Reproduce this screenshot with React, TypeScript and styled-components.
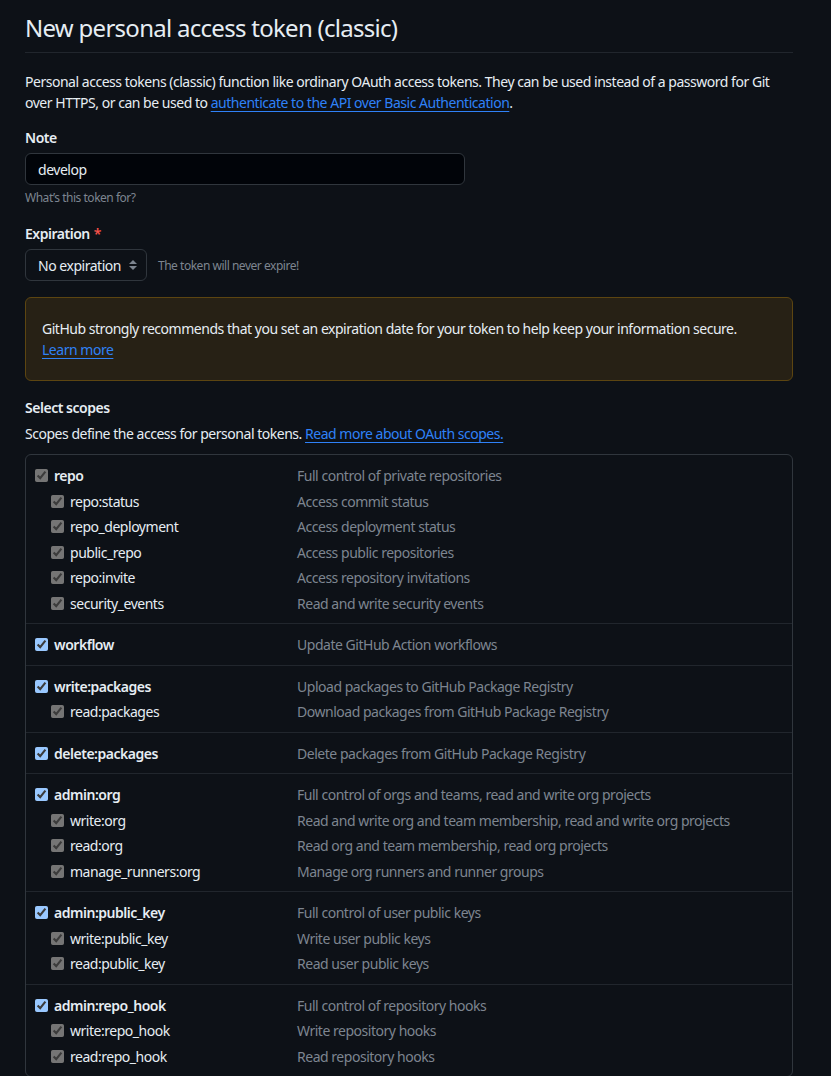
import React from 'react';
import styled, { createGlobalStyle } from 'styled-components';

const GlobalStyle = createGlobalStyle`
  html, body {
    margin: 0;
    background: #0d1117;
    color: #e6edf3;
    font-family: 'Noto Sans', 'Liberation Sans', sans-serif;
    font-size: 14px;
    letter-spacing: -0.034em;
    color-scheme: dark;
  }
  * { box-sizing: border-box; }
`;

const Page = styled.main`
  width: 768px;
  margin-left: 25px;
  padding-top: 10px;
`;

const Heading = styled.h1`
  margin: 0 0 18px;
  padding-bottom: 6px;
  font-size: 24px;
  font-weight: 400;
  line-height: 36px;
  letter-spacing: -0.03em;
  border-bottom: 1px solid #21262d;
`;

const Paragraph = styled.p<{ $flush?: boolean }>`
  margin: 0 0 ${p => (p.$flush ? '0' : '14px')};
  line-height: 21px;
`;

const Link = styled.a`
  color: #2f81f7;
  text-decoration: underline;
  text-underline-offset: 3px;
`;

const Label = styled.div`
  font-weight: 600;
  line-height: 21px;
  margin-bottom: 5px;
`;

const Required = styled.span`
  color: #f85149;
  margin-left: 4px;
`;

const Field = styled.div`
  margin-bottom: 16px;
`;

const TextInput = styled.div`
  width: 440px;
  height: 32px;
  padding: 0 12px;
  display: flex;
  align-items: center;
  background: #010409;
  border: 1px solid #30363d;
  border-radius: 6px;
`;

const Hint = styled.div`
  font-size: 12px;
  line-height: 18px;
  color: #7d8590;
  margin-top: 4px;
`;

const InlineRow = styled.div`
  display: flex;
  align-items: center;
  gap: 11px;
`;

const Select = styled.div`
  height: 32px;
  padding: 0 8px 0 12px;
  display: flex;
  align-items: center;
  gap: 7px;
  background: #0d1117;
  border: 1px solid #30363d;
  border-radius: 6px;
`;

const InlineHint = styled.span`
  font-size: 12px;
  color: #7d8590;
`;

const Flash = styled.div`
  padding: 20px 16px;
  margin-bottom: 16px;
  background: #272115;
  border: 1px solid #5c4511;
  border-radius: 6px;
  line-height: 21px;
`;

const Scopes = styled.div`
  border: 1px solid #30363d;
  border-radius: 6px;
  margin-top: 10px;
`;

const Group = styled.div`
  padding: 8px 0 7px 9px;
  & + & {
    border-top: 1px solid #21262d;
  }
`;

const Row = styled.label<{ $child?: boolean }>`
  display: grid;
  grid-template-columns: ${p => (p.$child ? '246px' : '262px')} 1fr;
  height: 25.5px;
  align-items: center;
  padding-left: ${p => (p.$child ? '16px' : '0')};
`;

const Name = styled.span<{ $child?: boolean }>`
  display: flex;
  align-items: center;
  gap: 6px;
  font-weight: ${p => (p.$child ? 400 : 600)};
`;

const Box = styled.input`
  width: 13px;
  height: 13px;
  margin: 0;
`;

const Desc = styled.span`
  color: #7d8590;
`;

type Scope = { name: string; desc: string; children?: [string, string][]; locked?: boolean };

const scopes: Scope[] = [
  {
    name: 'repo',
    desc: 'Full control of private repositories',
    locked: true,
    children: [
      ['repo:status', 'Access commit status'],
      ['repo_deployment', 'Access deployment status'],
      ['public_repo', 'Access public repositories'],
      ['repo:invite', 'Access repository invitations'],
      ['security_events', 'Read and write security events'],
    ],
  },
  { name: 'workflow', desc: 'Update GitHub Action workflows' },
  {
    name: 'write:packages',
    desc: 'Upload packages to GitHub Package Registry',
    children: [['read:packages', 'Download packages from GitHub Package Registry']],
  },
  { name: 'delete:packages', desc: 'Delete packages from GitHub Package Registry' },
  {
    name: 'admin:org',
    desc: 'Full control of orgs and teams, read and write org projects',
    children: [
      ['write:org', 'Read and write org and team membership, read and write org projects'],
      ['read:org', 'Read org and team membership, read org projects'],
      ['manage_runners:org', 'Manage org runners and runner groups'],
    ],
  },
  {
    name: 'admin:public_key',
    desc: 'Full control of user public keys',
    children: [
      ['write:public_key', 'Write user public keys'],
      ['read:public_key', 'Read user public keys'],
    ],
  },
  {
    name: 'admin:repo_hook',
    desc: 'Full control of repository hooks',
    children: [
      ['write:repo_hook', 'Write repository hooks'],
      ['read:repo_hook', 'Read repository hooks'],
    ],
  },
];

const SortIcon = () => (
  <svg width="10" height="14" viewBox="0 0 10 14" fill="#7d8590">
    <path d="M5 2 L9 6 H1 Z" />
    <path d="M5 12 L1 8 H9 Z" />
  </svg>
);

const App = () => (
  <>
    <GlobalStyle />
    <Page>
      <Heading>New personal access token (classic)</Heading>
      <Paragraph>
        Personal access tokens (classic) function like ordinary OAuth access tokens. They can be used instead of a
        password for Git over HTTPS, or can be used to{' '}
        <Link href="#">authenticate to the API over Basic Authentication</Link>.
      </Paragraph>

      <Field>
        <Label>Note</Label>
        <TextInput>develop</TextInput>
        <Hint>What’s this token for?</Hint>
      </Field>

      <Field>
        <Label>
          Expiration<Required>*</Required>
        </Label>
        <InlineRow>
          <Select>
            No expiration <SortIcon />
          </Select>
          <InlineHint>The token will never expire!</InlineHint>
        </InlineRow>
      </Field>

      <Flash>
        GitHub strongly recommends that you set an expiration date for your token to help keep your information
        secure.
        <br />
        <Link href="#">Learn more</Link>
      </Flash>

      <Label>Select scopes</Label>
      <Paragraph $flush>
        Scopes define the access for personal tokens. <Link href="#">Read more about OAuth scopes.</Link>
      </Paragraph>

      <Scopes>
        {scopes.map(s => (
          <Group key={s.name}>
            <Row>
              <Name>
                <Box type="checkbox" defaultChecked disabled={s.locked} />
                {s.name}
              </Name>
              <Desc>{s.desc}</Desc>
            </Row>
            {s.children?.map(([n, d]) => (
              <Row key={n} $child>
                <Name $child>
                  <Box type="checkbox" defaultChecked disabled />
                  {n}
                </Name>
                <Desc>{d}</Desc>
              </Row>
            ))}
          </Group>
        ))}
      </Scopes>
    </Page>
  </>
);

export default App;
